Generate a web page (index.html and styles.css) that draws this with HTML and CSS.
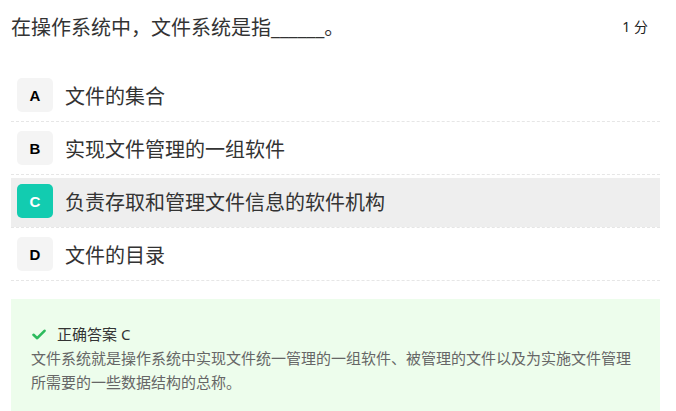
FILE: index.html
```html
<!DOCTYPE html>
<html>
<head>
<meta charset="utf-8">
<link rel="stylesheet" href="styles.css">
</head>
<body>

<div class="question">
  <div class="head">
    <div class="title">在操作系统中，文件系统是指______。</div>
    <div class="score">1 分</div>
  </div>

  <div class="options">
    <div class="option">
      <div class="option-inner">
        <span class="badge">A</span>
        <span class="option-text">文件的集合</span>
      </div>
    </div>
    <div class="option">
      <div class="option-inner">
        <span class="badge">B</span>
        <span class="option-text">实现文件管理的一组软件</span>
      </div>
    </div>
    <div class="option">
      <div class="option-inner selected">
        <span class="badge">C</span>
        <span class="option-text">负责存取和管理文件信息的软件机构</span>
      </div>
    </div>
    <div class="option">
      <div class="option-inner">
        <span class="badge">D</span>
        <span class="option-text">文件的目录</span>
      </div>
    </div>
  </div>

  <div class="answer">
    <div class="answer-title">
      <svg class="check" width="14" height="11" viewBox="0 0 14 11">
        <path d="M1.5 5.8 L5.2 9.2 L12.5 1.8" fill="none" stroke="#2dbb5d" stroke-width="2.6" stroke-linecap="round" stroke-linejoin="round"/>
      </svg>
      <span>正确答案 C</span>
    </div>
    <p class="answer-text">文件系统就是操作系统中实现文件统一管理的一组软件、被管理的文件以及为实施文件管理所需要的一些数据结构的总称。</p>
  </div>
</div>

</body>
</html>
```

FILE: styles.css
```css
body {
  margin: 0;
  padding: 0;
  background-color: #fff;
  font-family: "Noto Sans", "Noto Sans CJK SC", sans-serif;
  color: #333;
}

.question {
  width: 649px;
  margin-left: 11px;
}

.head {
  height: 52px;
  display: flex;
  align-items: center;
  justify-content: space-between;
  padding-right: 12px;
}

.title {
  font-size: 20px;
  color: #333;
}

.score {
  font-size: 14px;
  color: #222;
}

.options {
  margin-top: 17px;
}

.option {
  padding-top: 3px;
  border-bottom: 1px dashed #e6e6e6;
}

.option-inner {
  display: flex;
  align-items: center;
  gap: 12px;
  padding: 6px 6px 9px;
}

.option-inner.selected {
  background-color: #eeeeee;
}

.badge {
  width: 36px;
  height: 34px;
  border-radius: 5px;
  background-color: #f4f4f4;
  display: flex;
  align-items: center;
  justify-content: center;
  font-family: "Liberation Sans", Arial, sans-serif;
  font-weight: bold;
  font-size: 15px;
  color: #000;
}

.selected .badge {
  background-color: #12ccb0;
  color: #fff;
}

.option-text {
  font-size: 20px;
  color: #333;
}

.answer {
  margin-top: 18px;
  background-color: #edfdec;
  padding: 23px 20px 20px;
}

.answer-title {
  display: flex;
  align-items: center;
  gap: 11px;
  font-size: 15px;
  line-height: 24px;
  color: #333;
  padding-left: 1px;
}

.answer-text {
  margin: 0;
  font-size: 15px;
  line-height: 24px;
  color: #666;
}
```
